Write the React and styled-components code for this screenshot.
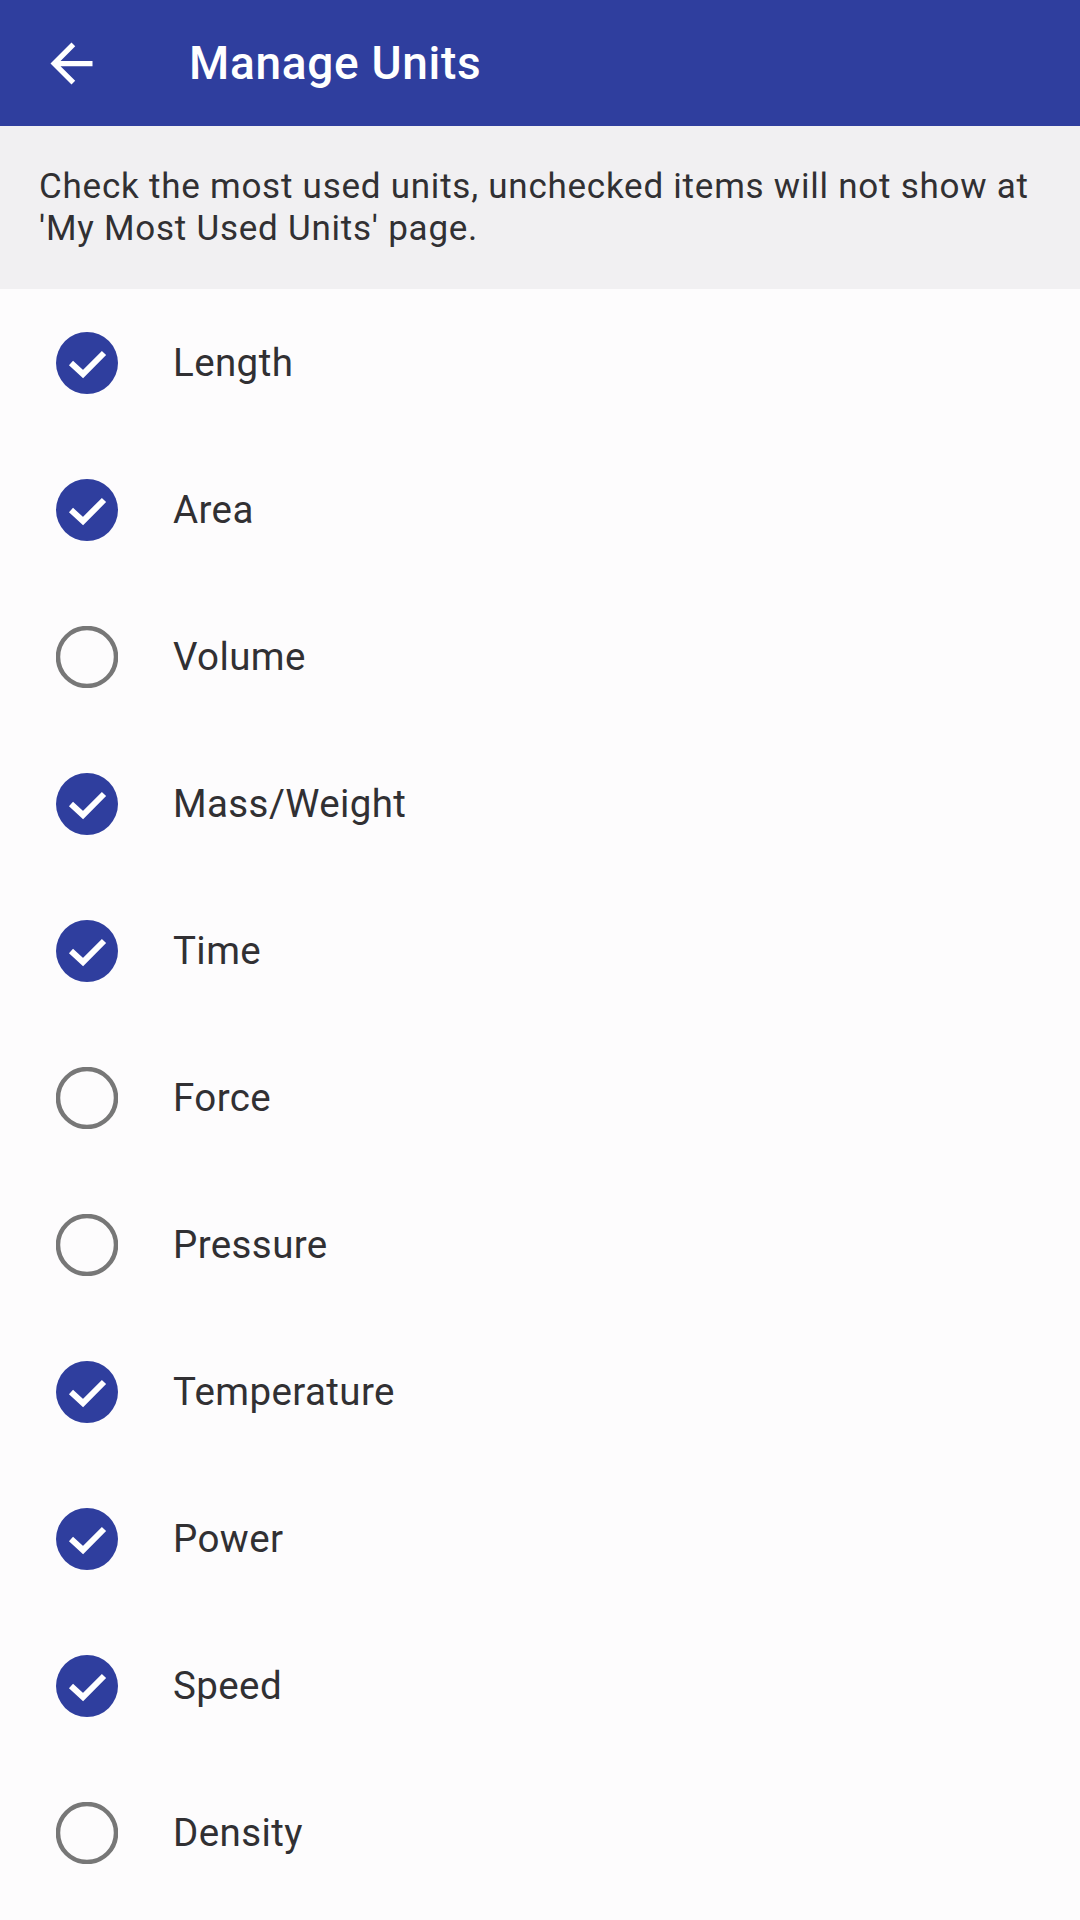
import React from 'react'
import styled, { createGlobalStyle } from 'styled-components'

const GlobalStyle = createGlobalStyle`
  html, body {
    margin: 0;
    padding: 0;
    background: #fdfcfd;
  }
  * { box-sizing: border-box; }
`

const Page = styled.div`
  width: 1080px;
  min-height: 1920px;
  background: #fdfcfd;
  font-family: Roboto, "Liberation Sans", sans-serif;
  color: #313033;
`

const AppBar = styled.header`
  height: 126px;
  background: #2f3e9e;
  display: flex;
  align-items: center;
  padding-left: 40px;
`

const BackButton = styled.button`
  width: 63px;
  height: 63px;
  padding: 0;
  border: none;
  background: transparent;
  display: flex;
  align-items: center;
  justify-content: center;
  cursor: pointer;
`

const Title = styled.h1`
  margin: 0 0 0 86px;
  font-size: 46px;
  font-weight: 500;
  color: #ffffff;
  letter-spacing: 0.7px;
`

const Notice = styled.div`
  height: 163px;
  background: #f1f0f2;
  padding: 0 20px 0 39px;
  display: flex;
  align-items: center;
  font-size: 35px;
  line-height: 42px;
  letter-spacing: 0.76px;
  color: #313033;
`

const List = styled.ul`
  list-style: none;
  margin: 0;
  padding: 0;
`

const Row = styled.li`
  height: 147px;
  display: flex;
  align-items: center;
  padding-left: 56px;
  cursor: pointer;
`

const Label = styled.span`
  margin-left: 55px;
  font-size: 38.5px;
  letter-spacing: 0.4px;
  color: #313033;
`

const Box = styled.svg`
  width: 62px;
  height: 62px;
  flex-shrink: 0;
`

const CheckCircle = ({ checked }) => (
  <Box viewBox="-31 -31 62 62">
    {checked ? (
      <>
        <circle r="31" fill="#2f3e9e" />
        <polyline
          points="-16,0 -4,11 17,-10"
          fill="none"
          stroke="#ffffff"
          strokeWidth="6"
        />
      </>
    ) : (
      <circle r="29" fill="none" stroke="#777777" strokeWidth="4.5" />
    )}
  </Box>
)

const units = [
  { name: 'Length', checked: true },
  { name: 'Area', checked: true },
  { name: 'Volume', checked: false },
  { name: 'Mass/Weight', checked: true },
  { name: 'Time', checked: true },
  { name: 'Force', checked: false },
  { name: 'Pressure', checked: false },
  { name: 'Temperature', checked: true },
  { name: 'Power', checked: true },
  { name: 'Speed', checked: true },
  { name: 'Density', checked: false },
]

const App = () => {
  const [items, setItems] = React.useState(units)

  const toggle = (i) => {
    setItems(items.map((u, j) => (j === i ? { ...u, checked: !u.checked } : u)))
  }

  return (
    <Page>
      <GlobalStyle />
      <AppBar>
        <BackButton aria-label="Back">
          <svg width="63" height="63" viewBox="0 0 24 24">
            <path
              d="M20 11H7.83l5.59-5.59L12 4l-8 8 8 8 1.41-1.41L7.83 13H20v-2z"
              fill="#ffffff"
            />
          </svg>
        </BackButton>
        <Title>Manage Units</Title>
      </AppBar>
      <Notice>
        Check the most used units, unchecked items will not show at 'My Most Used Units' page.
      </Notice>
      <List>
        {items.map((u, i) => (
          <Row key={u.name} onClick={() => toggle(i)}>
            <CheckCircle checked={u.checked} />
            <Label>{u.name}</Label>
          </Row>
        ))}
      </List>
    </Page>
  )
}

export default App
